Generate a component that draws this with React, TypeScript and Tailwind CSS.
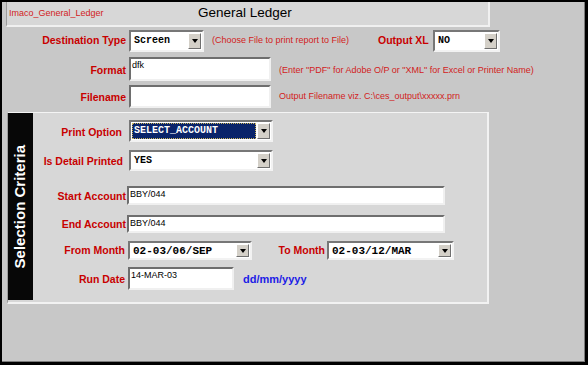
import clsx from 'clsx';

const FONT = "font-['Liberation_Sans',Arial,sans-serif]";
const MONO = "font-['Liberation_Mono','Courier_New',monospace]";
const LABEL = 'text-[10.5px] font-bold text-[#c80000] text-right whitespace-nowrap';
const HINT = 'text-[9px] text-[#d21c1c] whitespace-nowrap';

function Arrow() {
  return (
    <div className="w-[13px] my-[1px] mr-[1px] flex items-center justify-center bg-[#d4d0c8] border border-t-white border-l-white border-b-[#6f6f6f] border-r-[#6f6f6f]">
      <div className="w-0 h-0 border-l-[3px] border-r-[3px] border-t-[4px] border-l-transparent border-r-transparent border-t-black" />
    </div>
  );
}

function Select({
  className,
  value,
  active = false,
  text = 'text-[10px]',
}: {
  className: string;
  value: string;
  active?: boolean;
  text?: string;
}) {
  return (
    <div
      className={clsx(
        'flex bg-white border-2 border-t-[#777777] border-l-[#777777] border-b-[#f2f2f2] border-r-[#f2f2f2]',
        className,
      )}
    >
      <div className="flex-1 p-[1px]">
        <div
          className={clsx(
            'h-full pl-[1px] font-bold leading-[13px]',
            MONO,
            text,
            active ? 'bg-[#0a246a] text-white border border-dotted border-[#c9b35a]' : 'text-black border border-transparent',
          )}
        >
          {value}
        </div>
      </div>
      <Arrow />
    </div>
  );
}

function Input({ className, value = '' }: { className: string; value?: string }) {
  return (
    <div
      className={clsx(
        'bg-white border-2 border-t-[#6e6e6e] border-l-[#6e6e6e] border-b-[#f0f0f0] border-r-[#f0f0f0] pl-[1px] text-[9px] leading-[12px] text-black',
        FONT,
        className,
      )}
    >
      {value}
    </div>
  );
}

export default function App() {
  return (
    <div
      className={clsx(
        'w-[588px] h-[365px] bg-[#c8c8c8] border-t-2 border-l-2 border-r-[3px] border-b-[3px] border-black shadow-[inset_-1px_-1px_0_#7c7c7c] overflow-hidden',
        FONT,
      )}
    >
      {/* title strip */}
      <div className="ml-[4px] w-[484px] h-[25px] flex items-center bg-[#d7d7d7] border-l border-l-[#9c9c9c] border-r-2 border-r-[#f0f0f0] border-b-2 border-b-[#f0f0f0]">
        <span className="w-[191px] pl-[2px] text-[9px] text-[#d21c1c]">Imaco_General_Ledger</span>
        <span className="text-[13.5px] text-black">General Ledger</span>
      </div>

      {/* destination */}
      <div className="mt-[3px] h-[22px] flex items-center">
        <div className={clsx('w-[124px]', LABEL)}>Destination Type</div>
        <Select className="ml-[3px] w-[75px] h-[22px]" value="Screen" />
        <div className={clsx('ml-[8px] w-[166px]', HINT)}>(Choose File to print report to File)</div>
        <div className={clsx('w-[48px]', LABEL)}>Output XL</div>
        <Select className="ml-[7px] w-[67px] h-[22px]" value="NO" />
      </div>

      <div className="mt-[5px] h-[24px] flex items-center">
        <div className={clsx('w-[124px] pt-[3px]', LABEL)}>Format</div>
        <Input className="ml-[3px] w-[142px] h-[24px]" value="dfk" />
        <div className={clsx('ml-[8px] pt-[3px]', HINT)}>
          (Enter "PDF" for Adobe O/P or "XML" for Excel or Printer Name)
        </div>
      </div>

      <div className="mt-[4px] h-[23px] flex items-center">
        <div className={clsx('w-[124px] pt-[2px]', LABEL)}>Filename</div>
        <Input className="ml-[3px] w-[142px] h-[23px]" />
        <div className={clsx('ml-[8px] pt-[1px]', HINT)}>Output Filename viz. C:\ces_output\xxxxx.prn</div>
      </div>

      {/* selection criteria */}
      <div className="mt-[4px] ml-[5px] w-[482px] h-[192px] flex bg-[#d7d7d7] border-t border-t-[#f4f4f4] border-l border-l-[#9c9c9c] border-r-2 border-r-[#f2f2f2] border-b-2 border-b-[#f2f2f2]">
        <div className="w-[25px] h-[187px] bg-[#070707] flex items-center justify-center">
          <span className="[writing-mode:vertical-rl] rotate-180 text-white font-bold text-[15px] whitespace-nowrap">
            Selection Criteria
          </span>
        </div>

        <div className="flex flex-col">
          <div className="mt-[7px] h-[22px] flex items-center">
            <div className={clsx('w-[89px] pt-[3px]', LABEL)}>Print Option</div>
            <Select className="ml-[7px] w-[144px] h-[22px]" value="SELECT_ACCOUNT" active />
          </div>

          <div className="mt-[8px] h-[21px] flex items-center">
            <div className={clsx('w-[90px] pt-[3px]', LABEL)}>Is Detail Printed</div>
            <Select className="ml-[6px] w-[144px] h-[21px]" value="YES" />
          </div>

          <div className="mt-[15px] h-[19px] flex items-center">
            <div className={clsx('w-[93px] pt-[3px]', LABEL)}>Start Account</div>
            <Input className="ml-[1px] w-[318px] h-[19px]" value="BBY/044" />
          </div>

          <div className="mt-[10px] h-[18px] flex items-center">
            <div className={clsx('w-[93px] pt-[2px]', LABEL)}>End Account</div>
            <Input className="ml-[1px] w-[318px] h-[18px]" value="BBY/044" />
          </div>

          <div className="mt-[8px] h-[19px] flex items-center">
            <div className={clsx('w-[92px] pt-[1px]', LABEL)}>From Month</div>
            <Select className="ml-[3px] w-[124px] h-[19px]" value="02-03/06/SEP" text="text-[11px]" />
            <div className={clsx('w-[73px] pt-[1px]', LABEL)}>To Month</div>
            <Select className="ml-[2px] w-[127px] h-[19px]" value="02-03/12/MAR" text="text-[11px]" />
          </div>

          <div className="mt-[7px] h-[23px] flex items-center">
            <div className={clsx('w-[92px] pt-[2px]', LABEL)}>Run Date</div>
            <Input className="ml-[3px] w-[106px] h-[23px]" value="14-MAR-03" />
            <div className="ml-[9px] pt-[2px] text-[11px] font-bold text-[#1c1ce6]">dd/mm/yyyy</div>
          </div>
        </div>
      </div>
    </div>
  );
}
